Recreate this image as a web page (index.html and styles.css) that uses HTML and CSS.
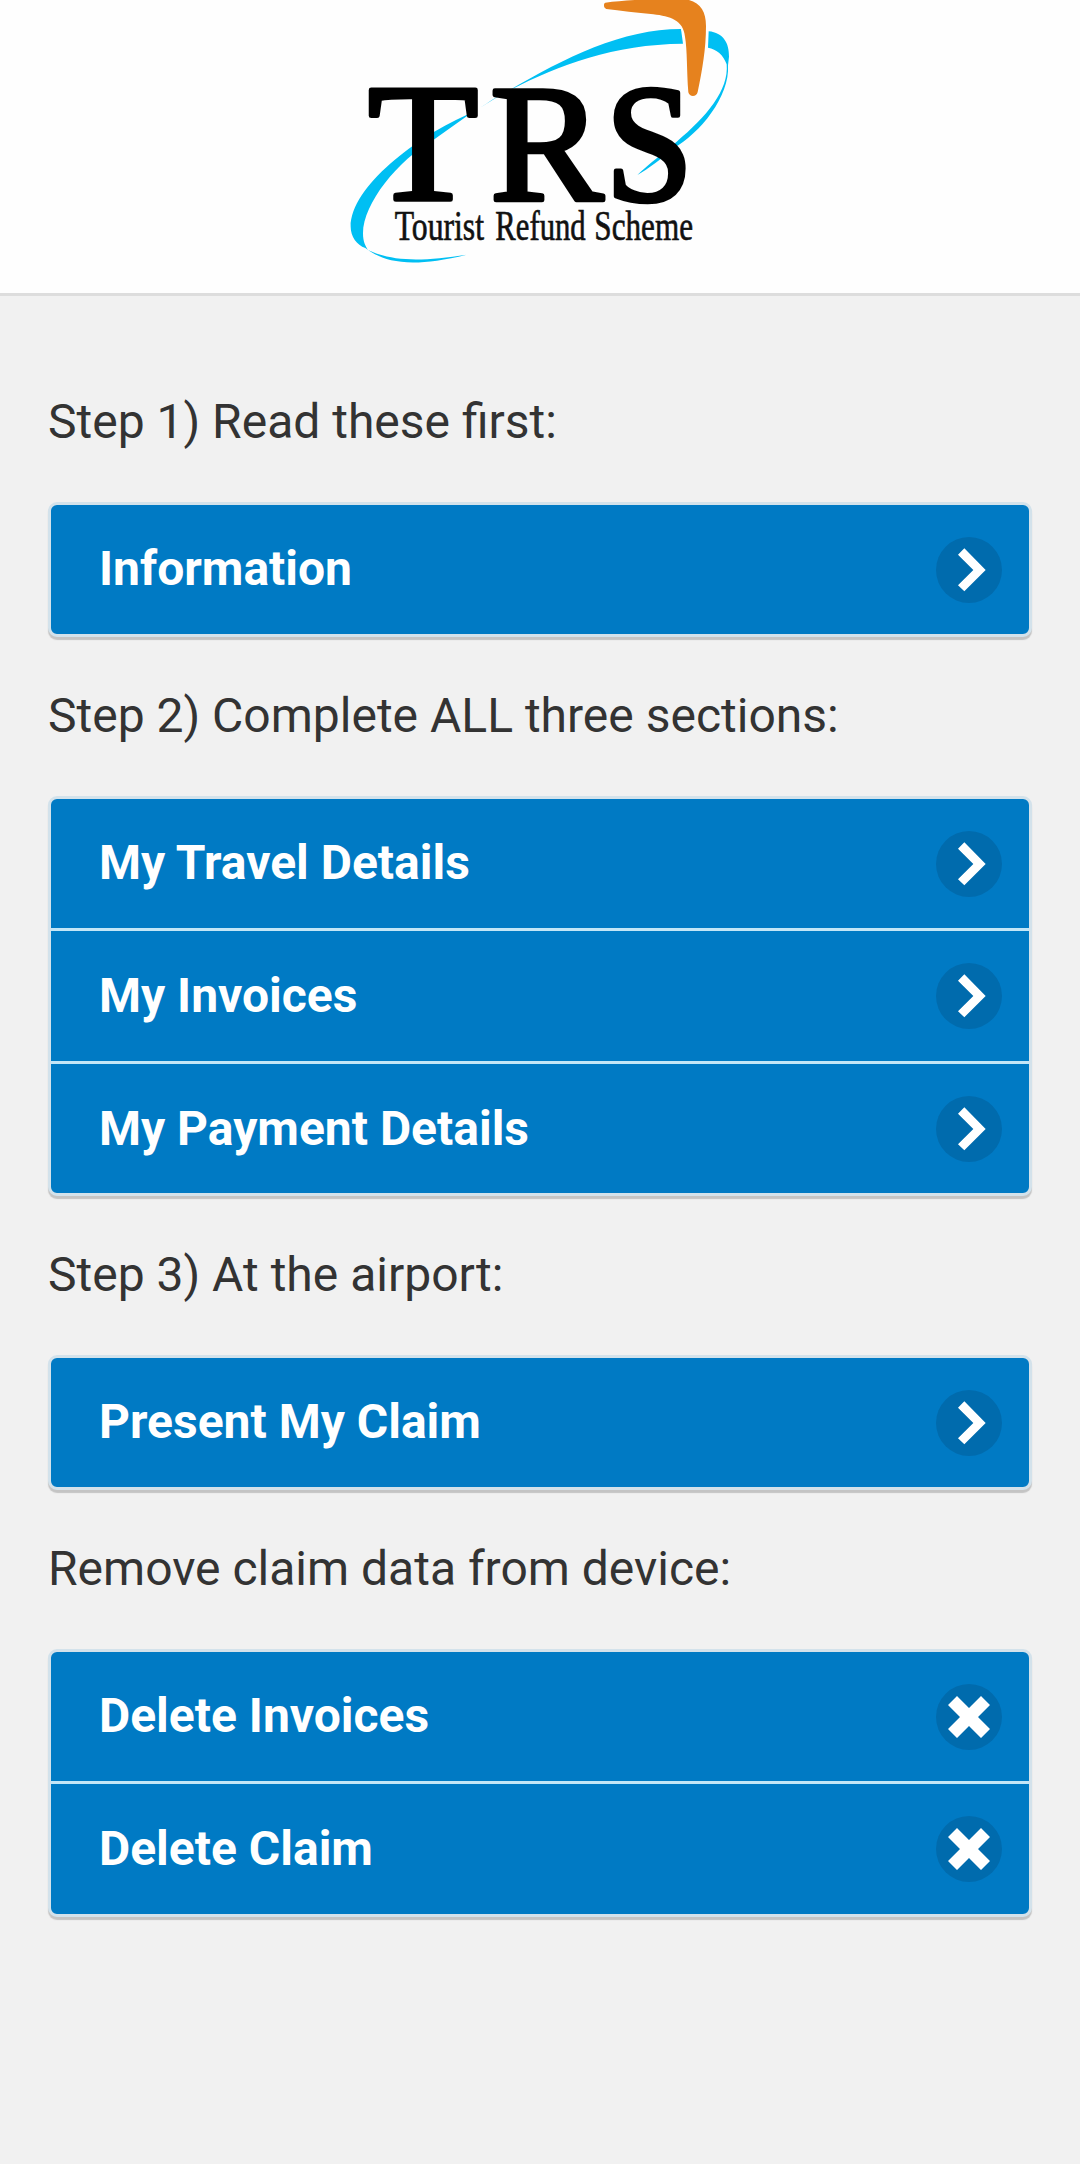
FILE: index.html
```html
<!DOCTYPE html>
<html lang="en">
<head>
    <meta charset="UTF-8">
    <meta name="viewport" content="width=device-width, initial-scale=1.0">
    <title>Tourist Refund Scheme</title>
    <link rel="stylesheet" href="styles.css">
</head>
<body>
    <!-- Shared icons for the list buttons -->
    <svg class="icon-defs" width="0" height="0">
        <symbol id="arrow" viewBox="0 0 198 198">
            <path d="M66 53L85 34L149 99L85 163L66 145L112 99Z"/>
        </symbol>
        <symbol id="cross" viewBox="0 0 198 198">
            <path d="M36 63L63 36L99 72L135 36L162 63L126 99L162 135L135 162L99 126L63 162L36 135L72 99Z"/>
        </symbol>
    </svg>

    <!-- Header with logo -->
    <header class="header">
        <svg class="logo" viewBox="0 0 1260 879" role="img" aria-label="TRS Tourist Refund Scheme">
            <!-- Blue orbit -->
            <g class="orbit">
                <path d="M450 323C650 202 850 87 1053 87L1059 131C850 133 690 194 540 270C500 289 475 308 450 323Z"/>
                <path d="M425 338C260 408 62 560 62 680C62 709 80 735 106 744C160 786 240 806 410 764C280 784 190 786 114 750C106 738 99 725 99 700C99 610 205 480 310 420Z"/>
                <path d="M1136 94C1180 98 1198 130 1197 170L1194 196C1200 290 1110 400 1030 445C995 478 955 506 922 525C955 492 1000 460 1040 425C1130 350 1197 270 1190 193C1180 164 1160 148 1134 143Z"/>
            </g>
            <!-- Boomerang -->
            <path class="boomerang" d="M826 8C880 1 940 -3 1050 -3C1105 -3 1128 28 1128 78C1128 145 1117 210 1103 276C1100 292 1078 292 1075 277C1070 210 1072 150 1065 110C1060 60 1020 49 970 43C920 38 870 32 829 27C820 24 820 10 826 8Z"/>
            <g class="logo-letters">
                <text x="114" y="601" textLength="331" lengthAdjust="spacingAndGlyphs">T</text>
                <text x="480" y="601" textLength="340" lengthAdjust="spacingAndGlyphs">R</text>
                <text x="826" y="601" textLength="264" lengthAdjust="spacingAndGlyphs">S</text>
            </g>
            <g class="logo-name">
                <text x="194" y="719" textLength="268" lengthAdjust="spacingAndGlyphs">Tourist</text>
                <text x="496" y="719" textLength="271" lengthAdjust="spacingAndGlyphs">Refund</text>
                <text x="793" y="719" textLength="296" lengthAdjust="spacingAndGlyphs">Scheme</text>
            </g>
        </svg>
    </header>

    <!-- Main menu -->
    <main class="content">
        <p>Step 1) Read these first:</p>
        <ul class="list">
            <li><a href="#">Information<svg class="icon"><use href="#arrow"/></svg></a></li>
        </ul>

        <p>Step 2) Complete ALL three sections:</p>
        <ul class="list">
            <li><a href="#">My Travel Details<svg class="icon"><use href="#arrow"/></svg></a></li>
            <li><a href="#">My Invoices<svg class="icon"><use href="#arrow"/></svg></a></li>
            <li><a href="#">My Payment Details<svg class="icon"><use href="#arrow"/></svg></a></li>
        </ul>

        <p>Step 3) At the airport:</p>
        <ul class="list">
            <li><a href="#">Present My Claim<svg class="icon"><use href="#arrow"/></svg></a></li>
        </ul>

        <p>Remove claim data from device:</p>
        <ul class="list">
            <li><a href="#">Delete Invoices<svg class="icon"><use href="#cross"/></svg></a></li>
            <li><a href="#">Delete Claim<svg class="icon"><use href="#cross"/></svg></a></li>
        </ul>
    </main>
</body>
</html>
```

FILE: styles.css
```css
/* Base styles */
body {
    margin: 0;
    min-height: 100vh;
    background-color: #f1f1f1;
    color: #333;
    font-family: Roboto, sans-serif;
    font-size: 48px;
    line-height: 1.3;
}

.icon-defs {
    display: block;
}

/* Header */
.header {
    background-color: #fefefe;
    border-bottom: 3px solid #ddd;
}

.logo {
    display: block;
    width: 420px;
    height: 293px;
    margin: 0 auto;
}

.orbit {
    fill: #00bff3;
}

.boomerang {
    fill: #e6821e;
    stroke: #fefefe;
    stroke-width: 10px;
    paint-order: stroke;
}

.logo-letters {
    font-family: "Liberation Serif", serif;
    font-size: 502px;
    fill: #000;
    stroke: #000;
    stroke-width: 14px;
    stroke-linejoin: round;
}

.logo-name {
    font-family: "Liberation Serif", serif;
    font-size: 124px;
    fill: #111;
    stroke: #111;
    stroke-width: 2px;
}

/* Menu sections */
.content {
    padding: 47.4px 48px;
}

.content p {
    margin: 48px 0;
}

.list {
    list-style: none;
    margin: 0;
    padding: 0;
    border: 3px solid #d3e2eb;
    border-radius: 9px;
    background-color: #007ac4;
    box-shadow: 0 3px 1px #c4c4c4;
}

.list li + li {
    border-top: 3px solid #c3e6f7;
}

.list a {
    display: flex;
    justify-content: space-between;
    align-items: center;
    padding: 33.6px 27px 33.6px 48px;
    color: #fff;
    font-weight: bold;
    text-decoration: none;
}

.icon {
    width: 66px;
    height: 66px;
    margin: -2px 0;
    border-radius: 50%;
    background-color: #006bad;
    fill: #fff;
}
```
